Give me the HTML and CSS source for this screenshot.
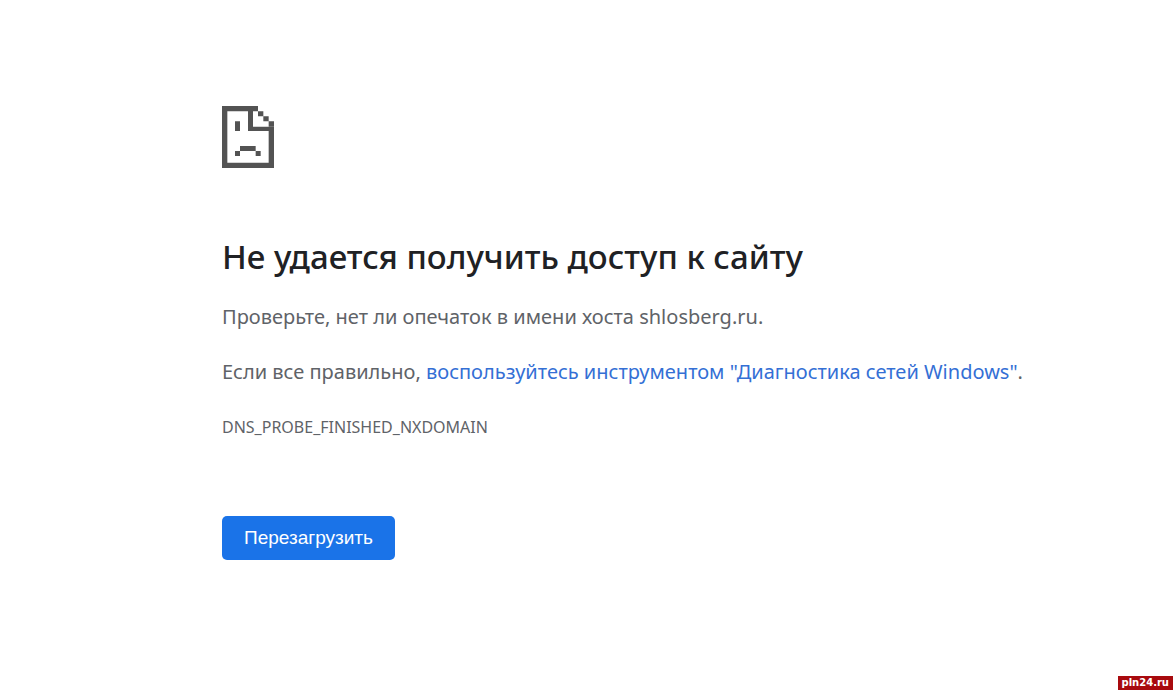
FILE: index.html
```html
<!DOCTYPE html>
<html lang="ru">
<head>
<meta charset="utf-8">
<meta name="viewport" content="width=device-width, initial-scale=1">
<title>shlosberg.ru</title>
<link rel="stylesheet" href="styles.css">
</head>
<body>
<main class="error">
  <svg class="error-icon" viewBox="0 0 156 186" aria-hidden="true">
    <path d="M0 0H108V16H93V62H156V186H0ZM16 16V170H140V75H78V16Z" fill-rule="evenodd"/>
    <path d="M108 16H124V31H108ZM124 31H140V46H124ZM140 46H156V62H140ZM39 46H54V75H39ZM54 120H101V135H54ZM39 135H54V150H39ZM101 135H116V150H101Z"/>
  </svg>
  <h1 class="error-title">Не удается получить доступ к сайту</h1>
  <p class="error-text">Проверьте, нет ли опечаток в имени хоста shlosberg.ru.</p>
  <p class="error-text">Если все правильно, <a class="error-link" href="#">воспользуйтесь инструментом "Диагностика сетей Windows"</a>.</p>
  <p class="error-code">DNS_PROBE_FINISHED_NXDOMAIN</p>
  <button class="reload" type="button">Перезагрузить</button>
</main>
<div class="watermark">pln24.ru</div>
</body>
</html>
```
FILE: styles.css
```css
body {
  margin: 0;
  background: #fff;
  color: #5f6368;
  font-family: "Noto Sans", "Open Sans", sans-serif;
}

.error {
  box-sizing: border-box;
  max-width: 905px;
  margin: 0 auto;
  padding: 106px 0 40px 88px;
}

.error-icon {
  display: block;
  width: 52px;
  height: 62px;
  fill: #535353;
}

.error-title {
  margin: 69px 0 24px;
  color: #202124;
  font-size: 33px;
  font-weight: 500;
  line-height: 40px;
}

.error-text {
  margin: 0 0 23px;
  font-size: 20px;
  line-height: 32px;
}

.error-link {
  color: #346fd5;
  text-decoration: none;
}

.error-code {
  margin: 0 0 73px;
  font-size: 16px;
  line-height: 32px;
}

.reload {
  display: block;
  padding: 0 22px;
  border: 0;
  border-radius: 5px;
  background: #1a73e8;
  color: #fff;
  font: 19px/44px "Liberation Sans", Arial, sans-serif;
}

.watermark {
  position: fixed;
  right: 0;
  bottom: 0;
  padding: 0 4px;
  background: #a80a0e;
  color: #fff;
  font: bold 10px/14px "DejaVu Sans", sans-serif;
}
```
